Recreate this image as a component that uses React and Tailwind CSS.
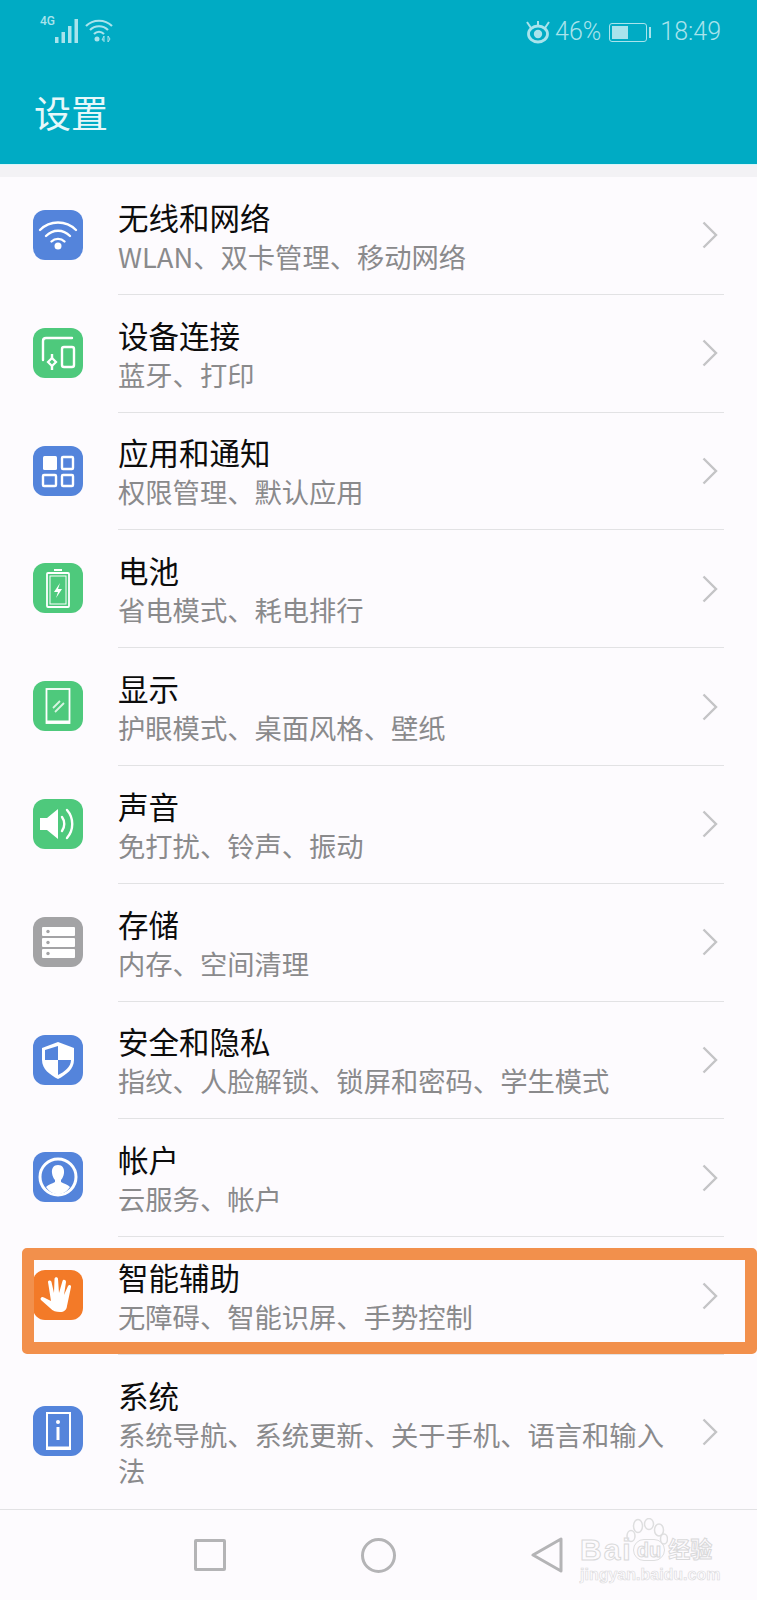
import React from "react";

const CJK = { fontFamily: "'Noto Sans CJK SC', sans-serif" };

const Tile = ({ color, children }) => (
  <div className={`h-[50px] w-[50px] shrink-0 rounded-[12px] ${color}`}>
    <svg viewBox="0 0 50 50" className="h-[50px] w-[50px]" fill="none" stroke="#fff" strokeWidth="2">
      {children}
    </svg>
  </div>
);

const blue = "bg-[#5484db]";
const green = "bg-[#4ec97c]";

const rows = [
  {
    title: "无线和网络",
    sub: "WLAN、双卡管理、移动网络",
    icon: (
      <Tile color={blue}>
        <path d="M7 20C17 10 33 10 43 20" strokeWidth="2.4" strokeLinecap="round" />
        <path d="M13 26C20 19 30 19 37 26" strokeWidth="2.4" strokeLinecap="round" />
        <path d="M18.5 31.5C22 28 28 28 31.500 31.500" strokeWidth="2.4" strokeLinecap="round" />
        <circle cx="25" cy="36" r="3.500" fill="#fff" stroke="none" />
      </Tile>
    ),
  },
  {
    title: "设备连接",
    sub: "蓝牙、打印",
    icon: (
      <Tile color={green}>
        <path d="M39 10H13Q10 10 10 13V32" strokeWidth="2.400" strokeLinecap="round" />
        <rect x="29" y="19" width="12" height="20" rx="2" strokeWidth="2.400" />
        <path d="M19 26V30M19 38V42" strokeWidth="2.400" />
        <path d="M19 30L23 34L19 38L15 34Z" strokeWidth="2.200" />
      </Tile>
    ),
  },
  {
    title: "应用和通知",
    sub: "权限管理、默认应用",
    icon: (
      <Tile color={blue}>
        <rect x="10" y="10" width="14" height="14" rx="1.500" fill="#fff" stroke="none" />
        <rect x="29" y="11" width="11" height="12" rx="1" strokeWidth="2.400" />
        <rect x="10" y="29" width="13" height="11" rx="1" strokeWidth="2.400" />
        <rect x="29" y="29" width="11" height="11" rx="1" strokeWidth="2.400" />
      </Tile>
    ),
  },
  {
    title: "电池",
    sub: "省电模式、耗电排行",
    icon: (
      <Tile color={green}>
        <path d="M21 7H29" strokeWidth="2" />
        <rect x="14" y="10" width="22" height="34" rx="1" strokeWidth="1.800" />
        <rect x="17" y="13" width="16" height="28" strokeWidth="1" />
        <path d="M27 20L21 29H25L23 35L29 26H25Z" fill="#fff" stroke="none" />
      </Tile>
    ),
  },
  {
    title: "显示",
    sub: "护眼模式、桌面风格、壁纸",
    icon: (
      <Tile color={green}>
        <rect x="13.500" y="8" width="23" height="34" strokeWidth="1.800" />
        <path d="M13 41H37" strokeWidth="3" />
        <path d="M20 27L27 20M22 31L31 22" strokeWidth="1.800" stroke="#d7f4e1" />
      </Tile>
    ),
  },
  {
    title: "声音",
    sub: "免打扰、铃声、振动",
    icon: (
      <Tile color={green}>
        <path d="M7 19H14L25 10V40L14 31H7Z" fill="#fff" stroke="none" />
        <path d="M29 18C32 22 32 28 29 32" strokeWidth="2.400" strokeLinecap="round" />
        <path d="M34 11C41 19 41 31 34 39" strokeWidth="2.400" strokeLinecap="round" />
      </Tile>
    ),
  },
  {
    title: "存储",
    sub: "内存、空间清理",
    icon: (
      <Tile color="bg-[#a3a3a5]">
        <rect x="9" y="10" width="33" height="9" rx="1" fill="#fff" stroke="none" />
        <rect x="9" y="21" width="33" height="9" rx="1" fill="#fff" stroke="none" />
        <rect x="9" y="32" width="33" height="9" rx="1" fill="#fff" stroke="none" />
        <circle cx="15" cy="14.500" r="1.700" fill="#a3a3a5" stroke="none" />
        <circle cx="15" cy="25.500" r="1.700" fill="#a3a3a5" stroke="none" />
        <circle cx="15" cy="36.500" r="1.700" fill="#a3a3a5" stroke="none" />
      </Tile>
    ),
  },
  {
    title: "安全和隐私",
    sub: "指纹、人脸解锁、锁屏和密码、学生模式",
    icon: (
      <Tile color={blue}>
        <path d="M25 7L41 13V25C41 34 33 40 25 44C17 40 9 34 9 25V13Z" fill="#fff" stroke="none" />
        <path d="M25 11V25H12V15Z" fill={"#5484db"} stroke="none" />
        <path d="M25 25H38C38 32 31 37 25 40Z" fill={"#5484db"} stroke="none" />
      </Tile>
    ),
  },
  {
    title: "帐户",
    sub: "云服务、帐户",
    icon: (
      <Tile color={blue}>
        <circle cx="25" cy="25" r="18" strokeWidth="3" />
        <path d="M25 13C20.500 13 18.500 16.500 19 21C19.400 24 20.500 26.500 22 28V30C19 32 15 32.500 13 35C16 39.500 20 42 25 42C30 42 34 39.500 37 35C35 32.500 31 32 28 30V28C29.500 26.500 30.600 24 31 21C31.500 16.500 29.500 13 25 13Z" fill="#fff" stroke="none" />
      </Tile>
    ),
  },
  {
    title: "智能辅助",
    sub: "无障碍、智能识屏、手势控制",
    icon: (
      <Tile color="bg-[#f37a28]">
        <path
          d="M15 12C15 10 18 10 18.500 12L21 23L21.500 9C21.500 6.500 25 6.500 25 9L26 23L29.500 11C30 9 33 9.500 33 12L31 25L35 16C36 14 38.500 15 38 17L34 36C33.500 40 31 42 27 42C23 42 20 41 17 38L8 30C6.500 28 9 26 11 27.500L18 31Z"
          fill="#fff"
          stroke="none"
        />
      </Tile>
    ),
  },
];

const Chevron = () => (
  <svg width="16" height="28" viewBox="0 0 16 28" className="shrink-0" fill="none" stroke="#c4c4c6" strokeWidth="2.400">
    <path d="M1.500 1.500L14 14L1.500 26.500" />
  </svg>
);

const Row = ({ title, sub, icon, last }) => (
  <div className={`flex pl-[33px] ${last ? "flex-1" : "h-[117.8px]"}`}>
    <div className={last ? "mt-[51px]" : "mt-[33px]"}>{icon}</div>
    <div className={`ml-[35px] mr-[33px] flex flex-1 items-center justify-between pr-[6px] ${last ? "" : "border-b border-[#e2e2e4]"}`}>
      <div className={last ? "w-[555px]" : ""}>
        <div className="text-[30.500px] leading-[40px] text-[#0c0c0c]">{title}</div>
        <div className="mt-[1px] text-[27.300px] leading-[36px] text-[#8a8a8c]">{sub}</div>
      </div>
      <Chevron />
    </div>
  </div>
);

export default function App() {
  return (
    <div style={CJK} className="relative flex h-[1600px] w-[757px] flex-col overflow-hidden bg-[#fdfbfe]">
      <header className="h-[164px] shrink-0 bg-[#00abc4] px-[34px]">
        <div className="flex h-[64px] items-center justify-between pr-0">
          <div className="ml-[6px] flex items-start">
            <span style={{ fontFamily: "Roboto, sans-serif" }} className="mt-[-5px] text-[12px] leading-[14px] font-medium text-[#a9e3ec]">4G</span>
            <svg width="26" height="24" viewBox="0 0 26 24" fill="#a9e3ec" className="mb-[2px]">
              <rect x="0" y="18" width="3.500" height="6" />
              <rect x="6.500" y="13" width="3.500" height="11" />
              <rect x="13" y="7" width="3.500" height="17" />
              <rect x="19.500" y="0" width="3.500" height="24" />
            </svg>
            <svg width="28" height="24" viewBox="0 0 28 24" fill="none" stroke="#a9e3ec" strokeWidth="2.200" className="ml-[4px]">
              <path d="M1 7C8 0 20 0 27 7" />
              <path d="M5 11C10 6 18 6 23 11" />
              <path d="M9 15C12 12 16 12 19 15" />
              <circle cx="12" cy="20" r="2.500" fill="#a9e3ec" stroke="none" />
              <path d="M19 23V17L17 21H19M23 17V23L25 20Z" strokeWidth="1" />
            </svg>
          </div>
          <div style={{ fontFamily: "Roboto, sans-serif" }} className="mr-[2px] flex items-center text-[25px] leading-[30px] font-light text-[#a9e3ec]">
            <svg width="26" height="24" viewBox="0 0 26 24" fill="none" stroke="#a9e3ec" strokeWidth="2.800">
              <ellipse cx="13" cy="14" rx="9.500" ry="8" />
              <circle cx="13" cy="14" r="4.200" fill="#a9e3ec" stroke="none" />
              <path d="M2 2L6 8M24 2L20 8M13 1V5" strokeWidth="2" />
            </svg>
            <span className="ml-[4px]">46%</span>
            <div className="ml-[8px] flex items-center">
              <div className="h-[19px] w-[38px] rounded-[3px] border border-[#a9e3ec] p-[2px]">
                <div className="h-full w-[16px] bg-[#a9e3ec]" />
              </div>
              <div className="ml-[2px] h-[11px] w-[2px] bg-[#a9e3ec]" />
            </div>
            <span className="ml-[9px]">18:49</span>
          </div>
        </div>
        <h1 className="mt-[26px] text-[37px] leading-[44px] font-normal text-[#e6f8fa]">设置</h1>
      </header>
      <div className="h-[13px] shrink-0 border-t border-[#d8f6f9] bg-[#f3f2f5]" />
      <main className="flex flex-1 flex-col">
        {rows.map((r) => (
          <Row key={r.title} {...r} />
        ))}
        <Row
          last
          title="系统"
          sub="系统导航、系统更新、关于手机、语言和输入法"
          icon={
            <Tile color={blue}>
              <rect x="14" y="7" width="23" height="36" strokeWidth="2" />
              <path d="M13 42H38" strokeWidth="3" />
              <path d="M25 21V34" strokeWidth="3" />
              <circle cx="25" cy="16" r="2" fill="#fff" stroke="none" />
            </Tile>
          }
        />
      </main>
      <footer className="flex h-[91px] shrink-0 items-center gap-[135px] border-t border-[#e2e2e4] pl-[194px]">
        <div className="h-[32px] w-[32px] rounded-[2px] border-[3px] border-[#b4b4b6]" />
        <div className="h-[35px] w-[35px] rounded-full border-[3px] border-[#b4b4b6]" />
        <svg width="32" height="36" viewBox="0 0 32 36" fill="none" stroke="#b4b4b6" strokeWidth="3" strokeLinejoin="round">
          <path d="M30 2V34L2 18Z" />
        </svg>
      </footer>

      {/* orange annotation box */}
      <div className="absolute left-[22px] top-[1248px] h-[106px] w-[735px] rounded-[5px] border-[12px] border-[#f2904c]" />

      {/* baidu watermark */}
      <div className="absolute left-[580px] top-[1518px] w-[140px]">
        <svg width="42" height="32" viewBox="0 0 42 32" fill="none" stroke="#dededf" strokeWidth="1.500" className="absolute left-[46px] top-0">
          <ellipse cx="12" cy="8" rx="4.500" ry="6.500" />
          <ellipse cx="23" cy="6" rx="4.500" ry="5.500" />
          <ellipse cx="33" cy="12" rx="4.500" ry="6" />
          <ellipse cx="5" cy="18" rx="4" ry="5.500" />
          <ellipse cx="38" cy="21" rx="3.500" ry="5" />
        </svg>
        <div style={{ fontFamily: "'Liberation Sans', 'Noto Sans CJK SC', sans-serif" }} className="mt-[18px] flex h-[28px] items-center text-[30px] leading-[28px] font-bold text-[#fdfbfe] [-webkit-text-stroke:1px_#d9d9da]">
          <span className="tracking-[2px]">Bai</span>
          <span className="rounded-full border border-[#dededf] px-[3px] text-[20px] leading-[20px]">du</span>
          <span className="ml-[3px] text-[22px]">经验</span>
        </div>
        <div style={{ fontFamily: "'Liberation Sans', sans-serif" }} className="mt-[1px] text-[16px] leading-[20px] font-bold whitespace-nowrap text-[#fdfbfe] [-webkit-text-stroke:0.6px_#d9d9da]">
          jingyan.baidu.com
        </div>
      </div>
    </div>
  );
}
